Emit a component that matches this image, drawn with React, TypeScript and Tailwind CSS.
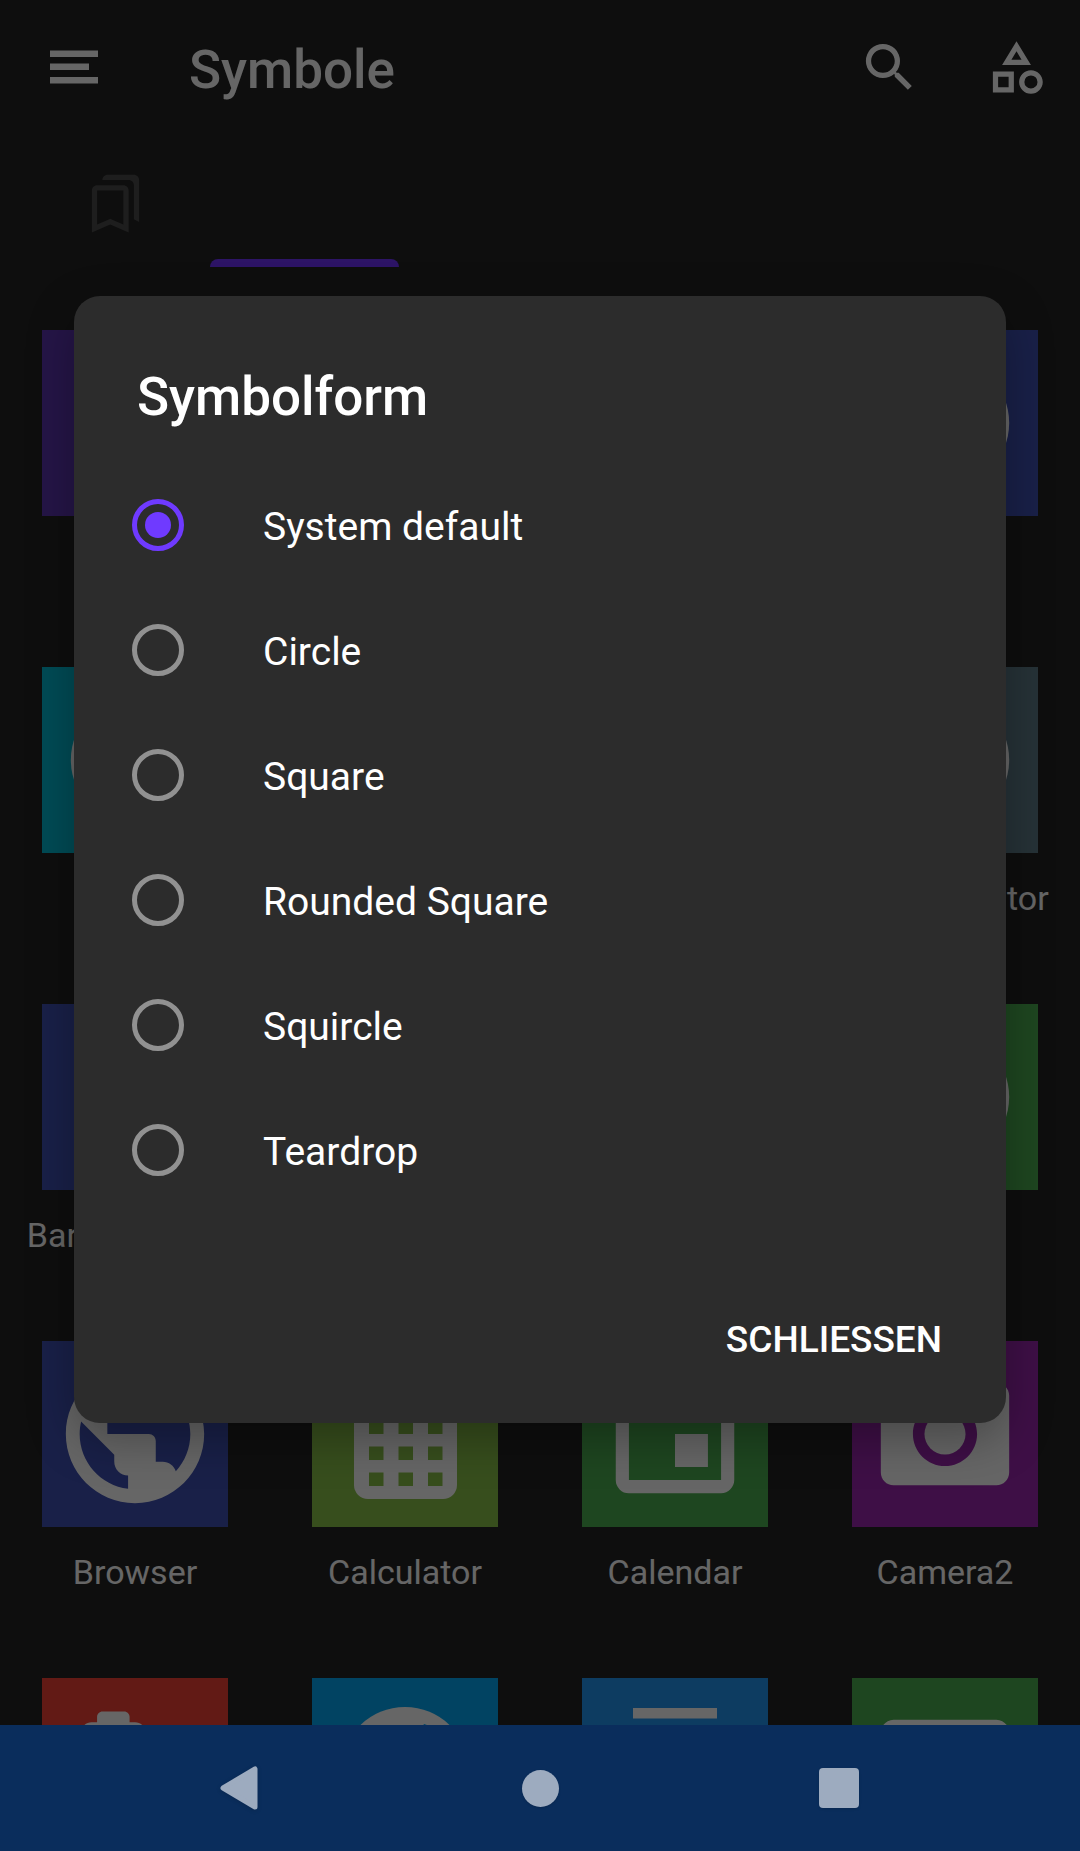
import { useState, type ReactNode } from "react";
import {
  MdCameraRoll,
  MdCircle,
  MdContacts,
  MdEmail,
  MdEvent,
  MdOutlineBookmarks,
  MdOutlineCategory,
  MdPhotoCamera,
  MdPublic,
  MdSearch,
} from "react-icons/md";

type AppTile = { id: string; label?: string; color: string; icon?: ReactNode };

function MenuIcon() {
  return (
    <svg viewBox="0 0 48 34" className="h-[34px] w-[48px]" fill="currentColor" aria-hidden="true">
      <rect x="0" y="0.5" width="48" height="6.5" />
      <rect x="0" y="13.5" width="39" height="6.5" />
      <rect x="0" y="27" width="48" height="6.5" />
    </svg>
  );
}

function CalculatorIcon() {
  const columns = [15, 44.5, 74];
  const rows = [14, 40, 66, 92];
  return (
    <svg viewBox="0 0 103 130" className="h-[130px] w-[103px]" aria-hidden="true">
      <rect width="103" height="130" rx="14" fill="#fff" />
      {rows.map((y) =>
        columns.map((x) => (
          <rect key={`${x}-${y}`} x={x} y={y + 11.5} width="14.500" height="13.5" fill="#8bc34a" />
        )),
      )}
    </svg>
  );
}

function DialIcon() {
  return (
    <svg viewBox="0 0 128 128" className="h-[128px] w-[128px]" aria-hidden="true">
      <circle cx="64" cy="64" r="64" fill="#fff" />
      <path d="M83 17 l6 2 l-22 45 l-8 -3z" fill="#03a9f4" />
    </svg>
  );
}

const disc = <MdCircle size={154} />;

const tiles: AppTile[] = [
  { id: "r1c1", color: "bg-[#5e35b1]" },
  { id: "r1c2", color: "bg-[#4caf50]" },
  { id: "r1c3", color: "bg-[#2196f3]" },
  { id: "r1c4", color: "bg-[#3f51b5]", icon: disc },
  { id: "r2c1", color: "bg-[#00bcd4]", icon: disc },
  { id: "r2c2", color: "bg-[#4caf50]" },
  { id: "r2c3", color: "bg-[#2196f3]" },
  { id: "r2c4", label: "Audio Creator", color: "bg-[#607d8b]", icon: disc },
  { id: "r3c1", label: "Barcode Tools", color: "bg-[#3f51b5]" },
  { id: "r3c2", color: "bg-[#4caf50]" },
  { id: "r3c3", color: "bg-[#2196f3]" },
  { id: "r3c4", color: "bg-[#4caf50]", icon: disc },
  { id: "browser", label: "Browser", color: "bg-[#3f51b5]", icon: <MdPublic size={166} /> },
  { id: "calculator", label: "Calculator", color: "bg-[#8bc34a]", icon: <CalculatorIcon /> },
  { id: "calendar", label: "Calendar", color: "bg-[#4caf50]", icon: <MdEvent size={158} /> },
  { id: "camera", label: "Camera2", color: "bg-[#9c27b0]", icon: <MdPhotoCamera size={154} /> },
  { id: "roll", color: "bg-[#f44336]", icon: <MdCameraRoll size={130} /> },
  { id: "dial", color: "bg-[#03a9f4]", icon: <DialIcon /> },
  { id: "contacts", color: "bg-[#2196f3]", icon: <MdContacts size={126} /> },
  { id: "mail", color: "bg-[#4caf50]", icon: <MdEmail size={154} /> },
];

const shapes = ["System default", "Circle", "Square", "Rounded Square", "Squircle", "Teardrop"];

function Tile({ tile }: { tile: AppTile }) {
  return (
    <li className="flex h-[337px] flex-col items-center">
      <div className={`flex size-[186px] items-center justify-center overflow-hidden ${tile.color}`}>
        {tile.icon}
      </div>
      {tile.label && (
        <span className="mt-[25px] text-[34px] leading-10 whitespace-nowrap">{tile.label}</span>
      )}
    </li>
  );
}

function ShapeDialog() {
  const [shape, setShape] = useState(shapes[0]);
  return (
    <div
      role="dialog"
      aria-modal="true"
      aria-labelledby="shape-title"
      className="w-full rounded-[26px] bg-[#2c2c2c] shadow-[0_16px_48px_rgba(0,0,0,0.3)]"
    >
      <h2 id="shape-title" className="px-[63px] pt-[70px] pb-[34px] text-[53px] leading-[62px] font-medium">
        Symbolform
      </h2>
      <fieldset aria-labelledby="shape-title">
        {shapes.map((name) => (
          <label key={name} className="flex h-[125px] items-center pl-[58px] text-[39px]">
            <input
              type="radio"
              name="shape"
              checked={shape === name}
              onChange={() => setShape(name)}
              className="mr-[79px] flex size-[52px] appearance-none items-center justify-center rounded-full border-5 border-[#919191] checked:border-[#6f3aff] checked:before:size-[26px] checked:before:rounded-full checked:before:bg-[#6f3aff] checked:before:content-['']"
            />
            <span className="pt-1.5">{name}</span>
          </label>
        ))}
      </fieldset>
      <div className="flex justify-end px-8 pt-[65px] pb-5">
        <button type="button" className="h-[126px] px-8 text-[37px] font-medium">
          SCHLIESSEN
        </button>
      </div>
    </div>
  );
}

export default function App() {
  return (
    <div className="flex h-screen flex-col overflow-hidden bg-[#232323] font-['Roboto',sans-serif] text-white">
      <div className="relative flex-1 overflow-hidden">
        <header>
          <div className="flex h-[138px] items-center pr-8 pb-1 pl-[50px]">
            <button type="button" aria-label="Menü">
              <MenuIcon />
            </button>
            <h1 className="ml-[91px] flex-1 pt-2 text-[53px] font-medium">Symbole</h1>
            <button type="button" aria-label="Suchen">
              <MdSearch size={63} />
            </button>
            <button type="button" aria-label="Symbolform" className="ml-16">
              <MdOutlineCategory size={63} />
            </button>
          </div>
          <div role="tablist" className="flex h-[129px] px-[21px]">
            <button
              type="button"
              role="tab"
              aria-label="Lesezeichen"
              className="flex w-[189px] items-center justify-center pt-0.5 text-[#4b4b4b]"
            >
              <MdOutlineBookmarks size={63} />
            </button>
            <button type="button" role="tab" aria-selected="true" aria-label="Alle" className="flex w-[189px] items-end">
              <span className="h-2 w-full rounded-t-lg bg-[#7033ff]" />
            </button>
          </div>
        </header>
        <ul className="grid grid-cols-4 pt-[63px]">
          {tiles.map((tile) => (
            <Tile key={tile.id} tile={tile} />
          ))}
        </ul>
        <div className="absolute inset-0 flex items-center justify-center bg-black/60 px-[74px] pb-1.5">
          <ShapeDialog />
        </div>
      </div>
      <nav className="flex h-[126px] shrink-0 items-center justify-center gap-[173px] bg-[#0a2d5c] text-[#9dabbf]">
        <button type="button" aria-label="Zurück" className="flex h-full w-[126px] items-center justify-center">
          <svg viewBox="0 0 42 44" className="h-11 w-[42px] drop-shadow-sm" aria-hidden="true">
            <path
              d="M3 22 L35 3 V41 Z"
              fill="currentColor"
              stroke="currentColor"
              strokeWidth="5"
              strokeLinejoin="round"
            />
          </svg>
        </button>
        <button type="button" aria-label="Startbildschirm" className="flex h-full w-[126px] items-center justify-center">
          <span className="size-[37px] rounded-full bg-current shadow-sm" />
        </button>
        <button type="button" aria-label="Letzte Apps" className="flex h-full w-[126px] items-center justify-center">
          <span className="size-10 rounded-sm bg-current shadow-sm" />
        </button>
      </nav>
    </div>
  );
}
